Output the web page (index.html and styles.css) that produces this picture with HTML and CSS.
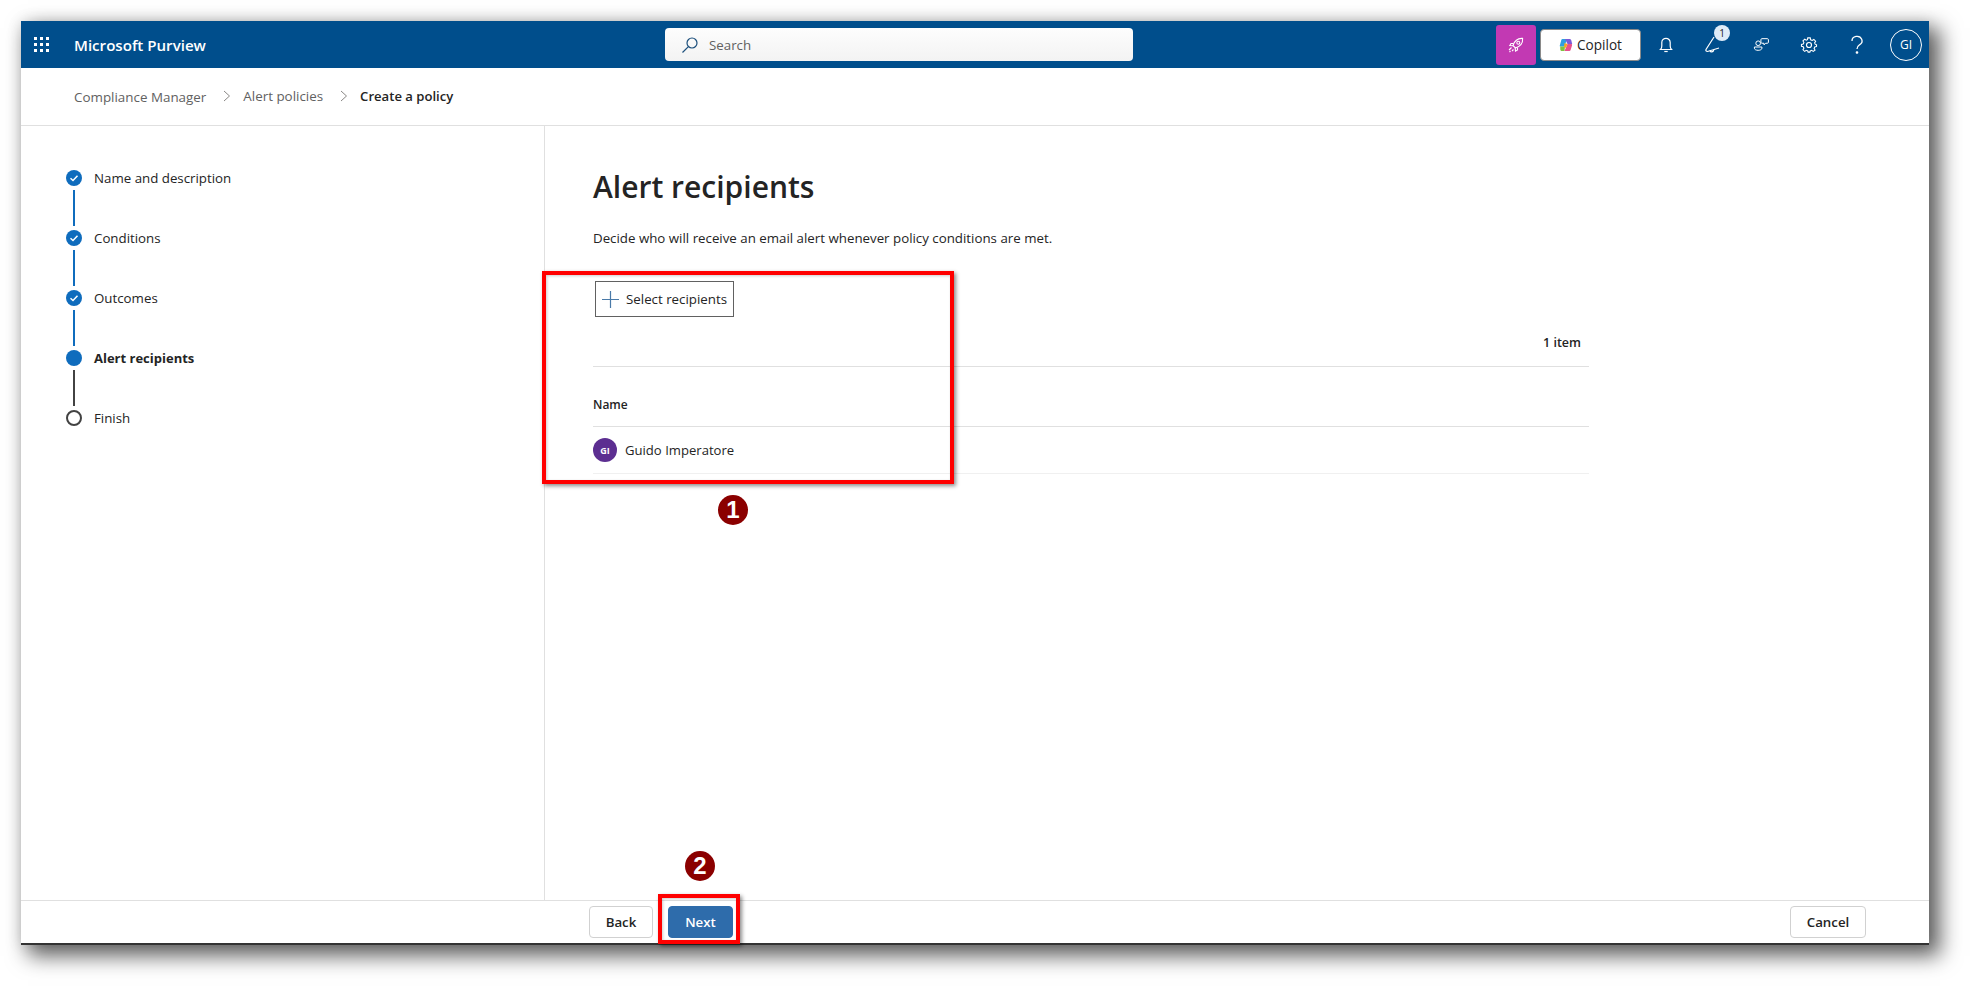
FILE: index.html
```html
<!DOCTYPE html>
<html lang="en">
<head>
<meta charset="utf-8">
<title>Alert recipients - Microsoft Purview</title>
<link rel="stylesheet" href="styles.css">
</head>
<body>
<div class="window">
  <header class="topbar">
    <div class="brand">
      <svg class="waffle" width="16" height="16" viewBox="0 0 16 16" fill="#fff"><rect x="0" y="0" width="3" height="3"/><rect x="6" y="0" width="3" height="3"/><rect x="12" y="0" width="3" height="3"/><rect x="0" y="6" width="3" height="3"/><rect x="6" y="6" width="3" height="3"/><rect x="12" y="6" width="3" height="3"/><rect x="0" y="12" width="3" height="3"/><rect x="6" y="12" width="3" height="3"/><rect x="12" y="12" width="3" height="3"/></svg>
      <span class="brand-name">Microsoft Purview</span>
    </div>
    <div class="search">
      <svg width="18" height="18" viewBox="0 0 18 18" fill="none" stroke="#1c4f7c" stroke-width="1.2"><circle cx="11" cy="7" r="5"/><path d="M7.4 10.6 1.5 16.5"/></svg>
      <span>Search</span>
    </div>
    <div class="actions">
      <div class="rocket">
        <svg width="18" height="18" viewBox="0 0 18 18" fill="none" stroke="#fff" stroke-width="1.1"><path d="M6 9.500 8.500 12C13 10.500 16 7 15.600 2.400 11 2 7.500 5 6 9.500Z"/><circle cx="11.300" cy="6.700" r="1.500"/><path d="M6.500 7.500H4L2.800 9.500 6 9.800M10.500 11.500V14L8.500 15.200 8.200 12M4.500 11.500 2 14M6.500 13.500 5 15M3.500 15 2.500 16"/></svg>
      </div>
      <div class="copilot">
        <svg width="14" height="14" viewBox="0 0 14 14"><path d="M3.500 1H8L5.500 8.500H1.500C.8 8.500.6 8 .8 7.400L2.300 2C2.500 1.400 2.900 1 3.500 1Z" fill="#2f9fe0"/><path d="M6 1H10.500C11.500 1 12 1.700 12.300 2.500L13.200 6H8.500Z" fill="#7c5bd6"/><path d="M8.500 6H12C13 6 13.300 6.600 13 7.400L11.600 12C11.300 12.800 10.800 13 10 13H5.500Z" fill="#e8508c"/><path d="M1.200 8.500H6L5.500 13H3C2 13 1.500 12.500 1.300 11.700Z" fill="#7fc241"/><path d="M5.500 5 8.500 6 7 10 5 9Z" fill="#f5a623"/></svg>
        <span>Copilot</span>
      </div>
      <button class="icon-btn bell" type="button" aria-label="Notifications">
        <svg width="18" height="18" viewBox="0 0 18 18" fill="none" stroke="#fff" stroke-width="1.200"><path d="M3.500 13.500C4.500 12.500 4.800 11.500 4.800 10V6.500A4.200 4.200 0 0 1 13.200 6.500V10C13.200 11.500 13.500 12.500 14.500 13.500Z"/><path d="M7.300 15.500H10.700"/></svg>
      </button>
      <button class="icon-btn feedback" type="button" aria-label="What's new">
        <svg width="20" height="20" viewBox="0 0 20 20" fill="none" stroke="#fff" stroke-width="1.200"><path d="M10 2 2 14.500C1.500 15.800 2.200 16.500 3.500 16.500L15 13"/><path d="M6 15.500C6.500 17.500 9 17.500 9.800 15"/></svg>
        <span class="badge">1</span>
      </button>
      <button class="icon-btn" type="button" aria-label="Community">
        <svg width="17" height="15" viewBox="0 0 20 18" fill="none" stroke="#fff" stroke-width="1.200"><circle cx="6" cy="7.500" r="2.800"/><path d="M1.500 12H10.500V13.500C10.500 15 8.500 16 6 16S1.500 15 1.500 13.500Z"/><path d="M10.500 2H17C17.800 2 18.300 2.500 18.300 3.200V6.300C18.300 7 17.800 7.500 17 7.500H15L13 9.500V7.500H10.500C9.800 7.500 9.300 7 9.300 6.300V3.200C9.300 2.500 9.800 2 10.500 2Z"/></svg>
      </button>
      <button class="icon-btn" type="button" aria-label="Settings">
        <svg width="18" height="18" viewBox="0 0 20 20" fill="none" stroke="#fff" stroke-width="1.300"><circle cx="10" cy="10" r="2.800"/><path d="M8.500 2H11.500L12 4.300 13.800 5.100 15.800 3.900 17.900 6 16.700 8 17.500 9.800 19 10.200V12.200L16.900 12.800 16.100 14.600 17.200 16.600 15.100 18.100 13.200 16.800 11.500 17.600 11 19H9L8.500 17.600 6.700 16.800 4.800 18.100 2.800 16.200 3.900 14.400 3.100 12.600 1 12.100V9.900L3.100 9.300 3.900 7.500 2.800 5.600 4.900 3.600 6.800 4.800 8.100 4.200Z" transform="translate(10 10) scale(.93) translate(-10 -10.500)"/></svg>
      </button>
      <button class="icon-btn" type="button" aria-label="Help">
        <svg width="16" height="20" viewBox="0 0 16 20" fill="none" stroke="#fff" stroke-width="1.300"><path d="M3 6A5 4.500 0 1 1 10.500 9.800C9 10.800 8 11.500 8 14"/><circle cx="8" cy="17.500" r=".7" fill="#fff"/></svg>
      </button>
      <div class="me">GI</div>
    </div>
  </header>

  <nav class="crumbs">
    <span class="crumb low">Compliance Manager</span>
    <svg class="chev" width="8" height="12" viewBox="0 0 8 12" fill="none" stroke="#8a8886"><path d="M1 1 6.500 6 1 11"/></svg>
    <span class="crumb">Alert policies</span>
    <svg class="chev" width="8" height="12" viewBox="0 0 8 12" fill="none" stroke="#8a8886"><path d="M1 1 6.500 6 1 11"/></svg>
    <span class="crumb current">Create a policy</span>
  </nav>

  <div class="middle">
    <aside class="sidebar">
      <ol class="steps">
        <li class="step done">
          <span class="dot"><svg width="10" height="10" viewBox="0 0 10 10" fill="none" stroke="#fff" stroke-width="1.500"><path d="M1.500 5.300 4 7.500 8.500 2.800"/></svg></span>
          <span class="label">Name and description</span>
        </li>
        <li class="line blue"></li>
        <li class="step done">
          <span class="dot"><svg width="10" height="10" viewBox="0 0 10 10" fill="none" stroke="#fff" stroke-width="1.500"><path d="M1.500 5.300 4 7.500 8.500 2.800"/></svg></span>
          <span class="label">Conditions</span>
        </li>
        <li class="line blue"></li>
        <li class="step done">
          <span class="dot"><svg width="10" height="10" viewBox="0 0 10 10" fill="none" stroke="#fff" stroke-width="1.500"><path d="M1.500 5.300 4 7.500 8.500 2.800"/></svg></span>
          <span class="label">Outcomes</span>
        </li>
        <li class="line blue"></li>
        <li class="step done active">
          <span class="dot"></span>
          <span class="label">Alert recipients</span>
        </li>
        <li class="line dark"></li>
        <li class="step todo">
          <span class="dot"></span>
          <span class="label">Finish</span>
        </li>
      </ol>
    </aside>
    <main class="content">
      <h1>Alert recipients</h1>
      <p class="lead">Decide who will receive an email alert whenever policy conditions are met.</p>
      <div class="list">
        <button class="select" type="button">
          <svg width="17" height="17" viewBox="0 0 17 17" stroke="#4a7aa8" stroke-width="1.200"><path d="M8.500 0V17M0 8.500H17"/></svg>
          <span>Select recipients</span>
        </button>
        <div class="count">1 item</div>
        <div class="head">Name</div>
        <div class="row">
          <span class="avatar">GI</span>
          <span>Guido Imperatore</span>
        </div>
      </div>
    </main>
  </div>

  <footer class="footer">
    <div class="footer-left">
      <button class="btn" type="button">Back</button>
      <button class="btn primary" type="button">Next</button>
    </div>
    <button class="btn cancel" type="button">Cancel</button>
  </footer>
</div>

<div class="mark box1"></div>
<div class="mark box2"></div>
<div class="num n1">1</div>
<div class="num n2">2</div>
</body>
</html>
```
FILE: styles.css
```css
* { box-sizing: border-box; }
html, body { margin: 0; height: 100%; }
body {
  position: relative;
  background: #fff;
  padding: 21px 42px 42px 21px;
  font-family: "Open Sans", "Noto Sans", sans-serif;
  font-size: 13.3px;
  color: #242424;
  overflow: hidden;
}
button { font-family: inherit; }

.window {
  height: 924px;
  display: flex;
  flex-direction: column;
  background: #fff;
  border-bottom: 2px solid #333;
  box-shadow: 9px 9px 20px 2px rgba(0, 0, 0, .62), 0 0 14px rgba(0, 0, 0, .1);
}

.topbar {
  height: 47px;
  flex: none;
  display: flex;
  align-items: center;
  background: #004e8c;
  color: #fff;
  position: relative;
}
.brand {
  width: 644px;
  display: flex;
  align-items: center;
  padding-left: 13px;
  gap: 24px;
}
.waffle { flex: none; }
.brand-name { font-size: 15.100px; font-weight: 600; }
.search {
  width: 468px;
  height: 33px;
  display: flex;
  align-items: center;
  gap: 10px;
  padding-left: 16px;
  border-radius: 4px;
  background: linear-gradient(#fdfdfd, #f3f3f3);
  color: #616161;
}
.actions {
  margin-left: auto;
  display: flex;
  align-items: center;
  padding-right: 7px;
}
.rocket {
  width: 40px;
  height: 40px;
  display: flex;
  align-items: center;
  justify-content: center;
  border-radius: 3px;
  background: #c239b3;
}
.copilot {
  width: 101px;
  height: 32px;
  margin-left: 4px;
  display: flex;
  align-items: center;
  justify-content: center;
  gap: 4px;
  border: 1px solid #8a8a8a;
  border-radius: 4px;
  background: #fff;
  color: #242424;
  font-size: 13.600px;
  font-weight: 500;
}
.icon-btn {
  position: relative;
  width: 48px;
  height: 40px;
  padding: 0;
  border: 0;
  background: none;
  display: flex;
  align-items: center;
  justify-content: center;
}
.bell svg { margin-left: 1px; }
.feedback svg { margin-left: 2px; }
.badge {
  position: absolute;
  top: 0;
  left: 25px;
  width: 16px;
  height: 16px;
  border-radius: 50%;
  background: #deecf9;
  color: #242424;
  font-size: 10px;
  line-height: 16px;
  text-align: center;
}
.me {
  width: 32px;
  height: 32px;
  margin-left: 9px;
  border: 1px solid #fff;
  border-radius: 50%;
  display: flex;
  align-items: center;
  justify-content: center;
  font-size: 12px;
}

.crumbs {
  height: 58px;
  flex: none;
  display: flex;
  align-items: center;
  padding: 0 0 2px 53px;
  border-bottom: 1px solid #e0e0e0;
  color: #616161;
  font-size: 13.400px;
}
.crumb.low { position: relative; top: 1px; }
.chev { margin: 0 12px 0 17px; }
.current { color: #242424; font-size: 13.100px; font-weight: 600; }

.middle { flex: 1; display: flex; min-height: 0; }
.sidebar {
  width: 524px;
  flex: none;
  padding: 44px 0 0 45px;
  border-right: 1px solid #e0e0e0;
}
.steps { list-style: none; margin: 0; padding: 0; }
.step { display: flex; align-items: center; height: 16px; gap: 12px; }
.dot {
  width: 16px;
  height: 16px;
  flex: none;
  display: flex;
  align-items: center;
  justify-content: center;
  border-radius: 50%;
  background: #0f6cbd;
}
.active .label { font-size: 13px; font-weight: 700; }
.todo .dot { background: #fff; border: 2px solid #424242; }
.line { width: 2px; height: 36px; margin: 4px 0 4px 7px; }
.line.blue { background: #0f6cbd; }
.line.dark { background: #424242; }

.content { flex: 1; padding: 0 0 0 48px; }
h1 {
  margin: 39px 0 0;
  font-size: 30px;
  line-height: 44px;
  font-weight: 600;
}
.lead { margin: 19px 0 0; line-height: 20px; }
.list { width: 996px; margin-top: 33px; }
.select {
  height: 36px;
  width: 139px;
  margin-left: 2px;
  display: flex;
  align-items: center;
  justify-content: center;
  gap: 7px;
  padding: 0;
  background: #fff;
  border: 1px solid #616161;
  color: #242424;
  font-size: 13.300px;
}
.count {
  height: 50px;
  padding: 17px 8px 0 0;
  text-align: right;
  font-weight: 600;
  font-size: 12.500px;
  border-bottom: 1px solid #e0e0e0;
}
.head {
  height: 60px;
  padding-top: 29px;
  font-size: 12px;
  font-weight: 600;
  border-bottom: 1px solid #e0e0e0;
}
.row {
  height: 47px;
  display: flex;
  align-items: center;
  gap: 8px;
  font-size: 13.100px;
  border-bottom: 1px solid #f0f0f0;
}
.avatar {
  width: 24px;
  height: 24px;
  border-radius: 50%;
  display: flex;
  align-items: center;
  justify-content: center;
  background: #5c2e91;
  color: #fff;
  font-size: 9px;
  font-weight: 700;
}

.footer {
  height: 43px;
  flex: none;
  display: flex;
  align-items: center;
  justify-content: space-between;
  padding: 0 63px 0 568px;
  border-top: 1px solid #e0e0e0;
}
.footer-left { display: flex; gap: 15px; }
.btn {
  height: 32px;
  padding: 0;
  width: 64px;
  background: #fff;
  border: 1px solid #d1d1d1;
  border-radius: 4px;
  color: #242424;
  font-size: 13.300px;
  font-weight: 600;
}
.btn.primary { width: 65px; background: #2e6cab; border-color: #2e6cab; color: #fff; }
.btn.cancel { width: 76px; }

.mark {
  position: absolute;
  border: 4px solid #f00;
  box-shadow: 2px 2px 4px rgba(0, 0, 0, .45), inset 1px 1px 3px rgba(0, 0, 0, .2);
}
.box1 { left: 542px; top: 271px; width: 412px; height: 213px; }
.box2 { left: 658px; top: 894px; width: 82px; height: 50px; }
.num {
  position: absolute;
  width: 30px;
  height: 30px;
  border-radius: 50%;
  background: #8b0000;
  color: #fff;
  font-family: "Liberation Sans", sans-serif;
  font-size: 24px;
  font-weight: 700;
  line-height: 30px;
  text-align: center;
}
.n1 { left: 718px; top: 495px; }
.n2 { left: 685px; top: 851px; }
```
